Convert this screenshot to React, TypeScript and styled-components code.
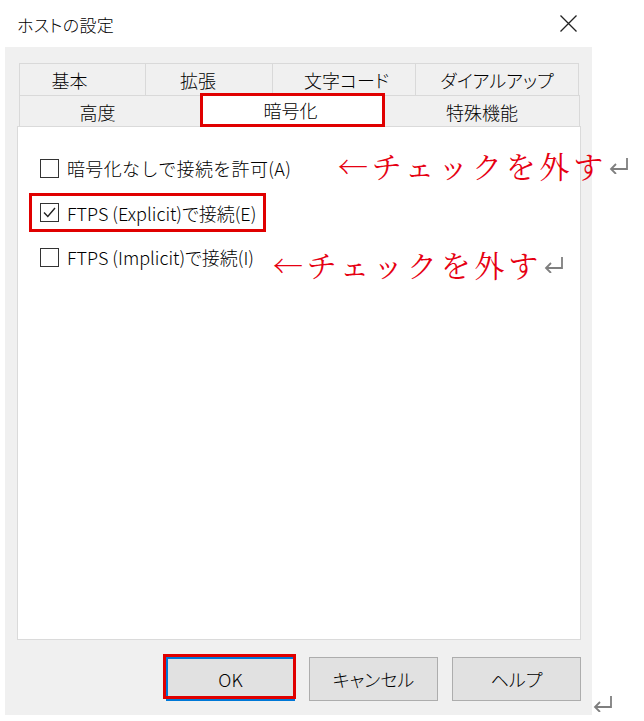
import React from "react";
import styled, { createGlobalStyle } from "styled-components";

const Global = createGlobalStyle`
  html, body { margin: 0; padding: 0; background: #ffffff; }
  body {
    font-family: "Noto Sans CJK JP", "Noto Sans", sans-serif;
    font-weight: 300;
    color: #000000;
  }
  * { box-sizing: border-box; }
`;

const Page = styled.div`
  position: relative;
  width: 644px;
  height: 721px;
  background: #ffffff;
  overflow: hidden;
`;

const TitleBar = styled.div`
  margin-left: 5px;
  width: 587px;
  height: 47px;
  display: flex;
  align-items: center;
  justify-content: space-between;
  padding: 0 15px 0 12px;
`;

const Title = styled.div`
  font-size: 17px;
  line-height: 1;
  font-feature-settings: "palt";
  letter-spacing: 0.3px;
  color: #000;
  margin-top: 2px;
`;

const Dialog = styled.div`
  margin-left: 5px;
  width: 587px;
  height: 668px;
  background: #f0f0f0;
  padding: 16px 11px 0 12px;
  display: flex;
  flex-direction: column;
`;

const Tabs = styled.div`
  margin: 0 2px;
  display: flex;
  flex-direction: column;
`;

const TabRow = styled.div<{ $cols: string; $h: number }>`
  display: grid;
  grid-template-columns: ${(p) => p.$cols};
  height: ${(p) => p.$h}px;
  border-left: 1px solid #d9d9d9;
`;

const Tab = styled.div<{ $pl?: number; $pr?: number; $active?: boolean }>`
  position: relative;
  display: flex;
  align-items: center;
  justify-content: center;
  padding-left: ${(p) => p.$pl ?? 0}px;
  padding-right: ${(p) => p.$pr ?? 0}px;
  border-top: 1px solid #d9d9d9;
  border-right: 1px solid #d9d9d9;
  background: #f0f0f0;
  font-size: 18px;
  line-height: 1;
  font-feature-settings: "palt";
  color: #000;
  white-space: nowrap;
  ${(p) =>
    p.$active &&
    `
    z-index: 2;
    align-self: start;
    margin-top: -2px;
    margin-left: -1px;
    height: 34px;
    background: #ffffff;
    border: 3px solid #e00000;
  `}
`;

const Content = styled.div`
  position: relative;
  z-index: 1;
  height: 514px;
  background: #ffffff;
  border: 1px solid #dadada;
  padding: 31px 0 0 22px;
  display: flex;
  flex-direction: column;
  align-items: flex-start;
`;

const OptionRow = styled.label<{ $full?: boolean }>`
  display: flex;
  align-items: center;
  gap: 8px;
  height: 20px;
  font-size: 18px;
  line-height: 1;
  font-feature-settings: ${(p) => (p.$full ? "normal" : '"palt"')};
  letter-spacing: ${(p) => (p.$full ? "0.35px" : "0")};
  color: #000;
  white-space: nowrap;
`;

const Highlight = styled.div`
  margin: 15px 0 15px -11px;
  width: 237px;
  height: 39px;
  border: 3px solid #e00000;
  padding-left: 8px;
  display: flex;
  align-items: center;
`;

const Box = styled.span`
  width: 19px;
  height: 19px;
  flex: none;
  border: 1px solid #333333;
  background: #ffffff;
  display: flex;
  align-items: center;
  justify-content: center;
`;

const ButtonBar = styled.div`
  margin-top: 17px;
  display: flex;
  justify-content: flex-end;
  gap: 14px;
`;

const Button = styled.button<{ $default?: boolean }>`
  position: relative;
  width: 129px;
  height: 44px;
  background: #e1e1e1;
  border: ${(p) => (p.$default ? "2px solid #0078d7" : "1px solid #adadad")};
  font-family: "Noto Sans CJK JP", "Noto Sans", sans-serif;
  font-weight: 300;
  font-size: 18px;
  font-feature-settings: "palt";
  color: #000;
  padding: 0;
  ${(p) =>
    p.$default &&
    `
    &::after {
      content: "";
      position: absolute;
      top: -5px;
      left: -5px;
      right: -3px;
      bottom: 0px;
      border: 3px solid #e00000;
    }
  `}
`;

const Note = styled.div<{ $top: number; $left: number }>`
  position: absolute;
  top: ${(p) => p.$top}px;
  left: ${(p) => p.$left}px;
  z-index: 5;
  height: 40px;
  display: flex;
  align-items: center;
`;

const NoteText = styled.span`
  font-family: "Noto Serif CJK JP", "Noto Sans CJK JP", serif;
  font-weight: 400;
  font-size: 30px;
  line-height: 40px;
  letter-spacing: 3.75px;
  color: #e60012;
  white-space: nowrap;
`;

const ReturnWrap = styled.span<{ $top?: number; $left?: number }>`
  display: inline-flex;
  margin-left: 2px;
  ${(p) =>
    p.$top !== undefined &&
    `
    position: absolute;
    top: ${p.$top}px;
    left: ${p.$left}px;
    margin-left: 0;
  `}
`;

function ReturnMark() {
  return (
    <svg width="20" height="17" viewBox="0 0 20 17" fill="none">
      <path
        d="M18 1 V12 H2 M7 7 L2 12 L7 17"
        stroke="#7f7f7f"
        strokeWidth="1.8"
        strokeLinejoin="miter"
      />
    </svg>
  );
}

function CloseIcon() {
  return (
    <svg width="17" height="17" viewBox="0 0 17 17">
      <path d="M0.5 0.5 L16.5 16.5 M16.5 0.5 L0.5 16.5" stroke="#222" strokeWidth="1.3" />
    </svg>
  );
}

function Check() {
  return (
    <svg width="15" height="15" viewBox="0 0 15 15">
      <polyline points="2,7.5 5.8,11.5 13,3" fill="none" stroke="#222" strokeWidth="1.4" />
    </svg>
  );
}

export default function App() {
  return (
    <>
      <Global />
      <Page>
        <TitleBar>
          <Title>ホストの設定</Title>
          <CloseIcon />
        </TitleBar>
        <Dialog>
          <Tabs>
            <TabRow $cols="126px 127px 143px 163px" $h={32}>
              <Tab $pr={26}>基本</Tab>
              <Tab $pr={22}>拡張</Tab>
              <Tab $pl={5}>文字コード</Tab>
              <Tab>ダイアルアップ</Tab>
            </TabRow>
            <TabRow $cols="181px 184px 195px" $h={31}>
              <Tab $pr={25}>高度</Tab>
              <Tab $active $pr={4}>暗号化</Tab>
              <Tab>特殊機能</Tab>
            </TabRow>
          </Tabs>
          <Content>
            <OptionRow $full>
              <Box />
              暗号化なしで接続を許可(A)
            </OptionRow>
            <Highlight>
              <OptionRow>
                <Box>
                  <Check />
                </Box>
                FTPS (Explicit)で接続(E)
              </OptionRow>
            </Highlight>
            <OptionRow>
              <Box />
              FTPS (Implicit)で接続(I)
            </OptionRow>
          </Content>
          <ButtonBar>
            <Button $default>OK</Button>
            <Button>キャンセル</Button>
            <Button>ヘルプ</Button>
          </ButtonBar>
        </Dialog>

        <Note $top={145} $left={338}>
          <NoteText>←チェックを外す</NoteText>
          <ReturnWrap>
            <ReturnMark />
          </ReturnWrap>
        </Note>
        <Note $top={244} $left={273}>
          <NoteText>←チェックを外す</NoteText>
          <ReturnWrap>
            <ReturnMark />
          </ReturnWrap>
        </Note>
        <ReturnWrap $top={695} $left={593}>
          <ReturnMark />
        </ReturnWrap>
      </Page>
    </>
  );
}
